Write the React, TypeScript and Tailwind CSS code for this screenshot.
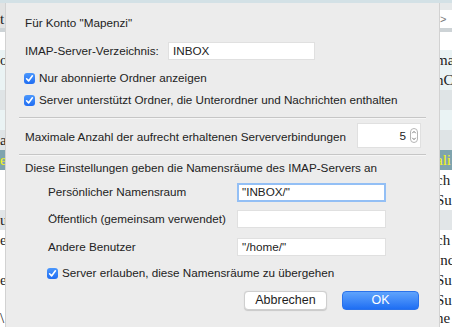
import React from "react";

type Row = { h: string; bg: string; lbg?: string; r?: string; l?: string; sel?: boolean };

const rows: Row[] = [
  { h: "h-[7px]", bg: "bg-[#e6e9ea]", lbg: "bg-[#e2e3e3]" },
  { h: "h-[18px]", bg: "bg-[#ffffff]", lbg: "bg-[#e2e3e3]", r: ">", l: "t" },
  { h: "h-[4px]", bg: "bg-[#cdd3d6]" },
  { h: "h-[18px]", bg: "bg-[#ffffff]" },
  { h: "h-[20px]", bg: "bg-[#eaf3f4]", r: "mat", l: "or" },
  { h: "h-[20px]", bg: "bg-[#eaf3f4]", r: "nC" },
  { h: "h-[20px]", bg: "bg-[#dfe4e6]" },
  { h: "h-[20px]", bg: "bg-[#eaf3f4]" },
  { h: "h-[20px]", bg: "bg-[#dfe4e6]", l: "a" },
  { h: "h-[20px]", bg: "bg-[#7fa4ae]", r: "ali", l: "e", sel: true },
  { h: "h-[20px]", bg: "bg-[#ffffff]", r: "ch" },
  { h: "h-[20px]", bg: "bg-[#ffffff]", r: "Su" },
  { h: "h-[20px]", bg: "bg-[#e2e6e8]", l: "u" },
  { h: "h-[20px]", bg: "bg-[#ffffff]", r: "ch", l: "e" },
  { h: "h-[20px]", bg: "bg-[#ffffff]", r: "ind" },
  { h: "h-[20px]", bg: "bg-[#ffffff]", r: "Su", l: "e" },
  { h: "h-[20px]", bg: "bg-[#ffffff]", r: "Su" },
  { h: "h-[17px]", bg: "bg-[#ffffff]", r: "ne", l: "\\" },
];

function Check() {
  return (
    <div className="w-[11px] h-[11px] rounded-[3px] bg-gradient-to-b from-[#4b97fc] to-[#1f6cf2] flex items-center justify-center shrink-0">
      <svg width="9" height="9" viewBox="0 0 9 9">
        <path d="M1.6 4.8 L3.6 6.9 L7.4 1.8" fill="none" stroke="white" strokeWidth="1.6" strokeLinecap="round" strokeLinejoin="round" />
      </svg>
    </div>
  );
}

function Sep() {
  return <div className="h-[2px] ml-[-6px] w-[407px] border-t border-[#c6c6c6] border-b border-b-[#f6f6f6]" />;
}

export default function App() {
  return (
    <div className="w-[452px] h-[327px] overflow-hidden flex flex-col bg-white font-['Liberation_Sans',Arial,sans-serif]">
      <div className="h-[3px] bg-[#d3e1e6] shrink-0" />
      <div className="flex flex-1 min-h-0">
        {/* left strip */}
        <div className="w-[5px] overflow-hidden flex flex-col shrink-0 font-['Liberation_Serif',serif] text-[15px] text-[#222]">
          {rows.map((r, i) => (
            <div key={i} className={`${r.h} ${r.lbg ?? r.bg} flex items-center whitespace-nowrap ${r.sel ? "text-[#f7f51c]" : ""}`}>
              {r.l ?? ""}
            </div>
          ))}
        </div>
        {/* dialog */}
        <div className="w-[435px] shrink-0 bg-[#ececec] border-x border-[#d2d2d2] flex flex-col pl-[19px] text-[11.7px] text-[#232323]">
          <div className="h-[18px] mt-[11px] flex items-center">Für Konto "Mapenzi"</div>
          <div className="h-[18px] mt-[10px] flex items-center">
            <span className="w-[143px]">IMAP-Server-Verzeichnis:</span>
            <div className="w-[147px] h-[18px] bg-white border border-[#e0e0e0] pl-[4px] flex items-center">INBOX</div>
          </div>
          <div className="h-[16px] mt-[10px] flex items-center gap-[4px] ml-[-1px]">
            <Check />
            <span>Nur abonnierte Ordner anzeigen</span>
          </div>
          <div className="h-[16px] mt-[6px] flex items-center gap-[4px] ml-[-1px]">
            <Check />
            <span>Server unterstützt Ordner, die Unterordner und Nachrichten enthalten</span>
          </div>
          <div className="mt-[9px]">
            <Sep />
          </div>
          <div className="h-[25px] mt-[4px] flex items-center justify-between pr-[18px]">
            <span className="mt-[2px]">Maximale Anzahl der aufrecht erhaltenen Serververbindungen</span>
            <div className="w-[64px] h-[25px] bg-white border border-[#e0e0e0] flex items-center justify-end gap-[4px] pr-[2px]">
              <span>5</span>
              <svg width="8" height="15" viewBox="0 0 8 15">
                <rect x="0.5" y="0.5" width="7" height="14" rx="3.5" fill="white" stroke="#b5b5b5" />
                <path d="M2.3 5.2 L4 3.4 L5.7 5.2" fill="none" stroke="#6b6b6b" strokeWidth="0.9" />
                <path d="M2.3 9.8 L4 11.6 L5.7 9.8" fill="none" stroke="#6b6b6b" strokeWidth="0.9" />
              </svg>
            </div>
          </div>
          <div className="mt-[6px]">
            <Sep />
          </div>
          <div className="h-[16px] mt-[4px] flex items-center">Diese Einstellungen geben die Namensräume des IMAP-Servers an</div>
          <div className="h-[18px] mt-[7px] flex items-center pl-[23px]">
            <span className="w-[189px]">Persönlicher Namensraum</span>
            <div className="w-[149px] h-[19px] bg-white border-[2px] border-[#93bff5] pl-[3px] flex items-center">"INBOX/"</div>
          </div>
          <div className="h-[18px] mt-[9px] flex items-center pl-[23px]">
            <span className="w-[189px]">Öffentlich (gemeinsam verwendet)</span>
            <div className="w-[149px] h-[18px] bg-white border border-[#e0e0e0] pl-[4px] flex items-center"></div>
          </div>
          <div className="h-[18px] mt-[10px] flex items-center pl-[23px]">
            <span className="w-[189px]">Andere Benutzer</span>
            <div className="w-[149px] h-[18px] bg-white border border-[#e0e0e0] pl-[4px] flex items-center">"/home/"</div>
          </div>
          <div className="h-[16px] mt-[9px] flex items-center gap-[4px] pl-[22px]">
            <Check />
            <span>Server erlauben, diese Namensräume zu übergehen</span>
          </div>
          <div className="h-[19px] mt-[10px] flex items-center justify-end gap-[15px] pr-[20px] text-[12.5px]">
            <div className="w-[83px] h-[19px] bg-white border border-[#cfcfcf] rounded-[4px] shadow-[0_0.5px_1px_rgba(0,0,0,0.15)] flex items-center justify-center text-[#1e1e1e]">
              Abbrechen
            </div>
            <div className="w-[77px] h-[19px] rounded-[4px] bg-gradient-to-b from-[#5fa3fc] to-[#1e6ef3] border border-[#2a72ea] flex items-center justify-center text-white font-medium">
              OK
            </div>
          </div>
        </div>
        {/* right strip */}
        <div className="w-[12px] overflow-hidden flex flex-col shrink-0 font-['Liberation_Serif',serif] text-[15px] text-[#222]">
          {rows.map((r, i) => (
            <div key={i} className={`${r.h} ${r.bg} flex items-center whitespace-nowrap ml-[-4px] ${r.sel ? "text-[#f7f51c]" : ""} ${r.r === ">" ? "text-[11px] text-[#777] font-['Liberation_Sans',sans-serif] ml-[0px]" : ""}`}>
              {r.r ?? ""}
            </div>
          ))}
        </div>
      </div>
    </div>
  );
}
